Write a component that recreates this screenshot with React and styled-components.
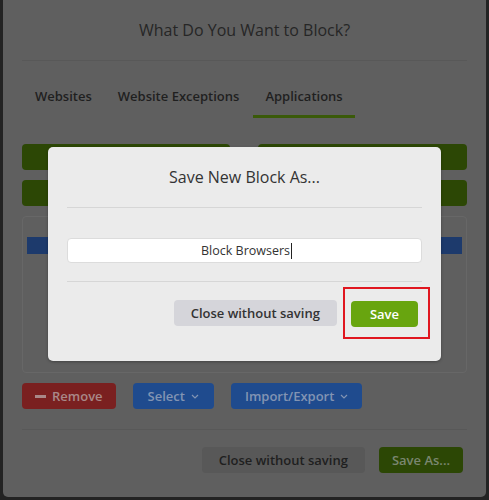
import React from "react";
import styled, { createGlobalStyle } from "styled-components";

const Global = createGlobalStyle`
  html, body {
    margin: 0;
    padding: 0;
    background: #232323;
  }
  body {
    font-family: "Open Sans", "Liberation Sans", sans-serif;
  }
`;

const Page = styled.div`
  position: relative;
  width: 489px;
  height: 500px;
  padding: 0 3px 3px 3px;
  box-sizing: border-box;
`;

const Dialog = styled.div`
  background: #5f5f5f;
  height: 497px;
  box-sizing: border-box;
  border-radius: 0 0 5px 5px;
  padding: 19px 19px 24px 19px;
  display: flex;
  flex-direction: column;
`;

const Title = styled.h2`
  margin: 0;
  font-size: 16px;
  font-weight: 400;
  line-height: 22px;
  text-align: center;
  color: ${(p) => (p.$dim ? "#262626" : "#333")};
`;

const Rule = styled.hr`
  border: 0;
  border-top: 1px solid ${(p) => (p.$dim ? "#585858" : "#d6d6d6")};
  margin: ${(p) => p.$m || "19px 0 0 0"};
`;

const Tabs = styled.div`
  display: flex;
  gap: 2px;
  margin-top: 26px;
  padding-left: 1px;
`;

const Tab = styled.div`
  padding: 0 12px 10px;
  font-size: 13px;
  font-weight: 600;
  line-height: 18px;
  color: #1f1f1f;
  border-bottom: 3px solid ${(p) => (p.$active ? "#3a5a09" : "transparent")};
`;

const Grid = styled.div`
  display: grid;
  grid-template-columns: 208px 209px;
  column-gap: 28px;
  row-gap: 10px;
  margin-top: 26px;
`;

const GreenBar = styled.div`
  height: 26px;
  background: #2c4705;
  border-radius: 4px;
`;

const Panel = styled.div`
  margin-top: 10px;
  height: 158px;
  box-sizing: border-box;
  border: 1px solid #676767;
  border-radius: 4px;
  padding: 20px 4px 0 4px;
`;

const BlueRow = styled.div`
  height: 17px;
  background: #1d3a6c;
`;

const Actions = styled.div`
  display: flex;
  gap: 17px;
  margin-top: 10px;
`;

const Btn = styled.div`
  height: 26px;
  box-sizing: border-box;
  display: inline-flex;
  align-items: center;
  justify-content: center;
  gap: 6px;
  padding: 0 ${(p) => p.$px || 14}px;
  border-radius: 4px;
  font-size: 13px;
  font-weight: 600;
  background: ${(p) => p.$bg};
  color: ${(p) => p.$fg};
  white-space: nowrap;
`;

const Footer = styled.div`
  display: flex;
  justify-content: flex-end;
  gap: 14px;
  margin-top: 17px;
  padding-right: 4px;
`;

const Overlay = styled.div`
  position: absolute;
  inset: 0;
  display: flex;
  align-items: flex-start;
  justify-content: center;
  padding-top: 147px;
  box-sizing: border-box;
`;

const Modal = styled.div`
  width: 393px;
  box-sizing: border-box;
  background: #ebebeb;
  border-radius: 5px;
  padding: 19px 19px 22px;
  display: flex;
  flex-direction: column;
  box-shadow: 0 1px 3px rgba(0, 0, 0, 0.3);
`;

const Field = styled.div`
  margin-top: 30px;
  height: 25px;
  box-sizing: border-box;
  background: #fff;
  border: 1px solid #dcdcdc;
  border-radius: 4px;
  display: flex;
  align-items: center;
  justify-content: center;
  padding-left: 4px;
  font-size: 12.5px;
  color: #333;
`;

const Caret = styled.span`
  display: inline-block;
  width: 1px;
  height: 16px;
  background: #222;
  margin-left: 1px;
`;

const ModalFooter = styled.div`
  display: flex;
  justify-content: flex-end;
  align-items: center;
  gap: 6px;
  margin-top: 5px;
  margin-right: -8px;
`;

const Highlight = styled.div`
  border: 2px solid #e0161f;
  padding: 12px 10px 10px 6px;
  display: flex;
`;

const Chevron = ({ color }) => (
  <svg width="8" height="5" viewBox="0 0 8 5" fill="none">
    <path d="M1 1l3 3 3-3" stroke={color} strokeWidth="1.2" />
  </svg>
);

export default function App() {
  return (
    <Page>
      <Global />
      <Dialog>
        <Title $dim>What Do You Want to Block?</Title>
        <Rule $dim />
        <Tabs>
          <Tab>Websites</Tab>
          <Tab>Website Exceptions</Tab>
          <Tab $active>Applications</Tab>
        </Tabs>
        <Grid>
          <GreenBar />
          <GreenBar />
          <GreenBar />
          <GreenBar />
        </Grid>
        <Panel>
          <BlueRow />
        </Panel>
        <Actions>
          <Btn $bg="#7a2020" $fg="#a98888" $px={13}>
            <svg width="11" height="3" viewBox="0 0 11 3">
              <rect width="11" height="3" fill="#a98888" />
            </svg>
            Remove
          </Btn>
          <Btn $bg="#1f4b8e" $fg="#8294b3" $px={15}>
            Select <Chevron color="#8294b3" />
          </Btn>
          <Btn $bg="#1f4b8e" $fg="#8294b3">
            Import/Export <Chevron color="#8294b3" />
          </Btn>
        </Actions>
        <Rule $dim $m="20px 0 0 0" />
        <Footer>
          <Btn $bg="#585858" $fg="#1f1f1f" $px={17}>
            Close without saving
          </Btn>
          <Btn $bg="#2c4705" $fg="#7a8670" $px={13}>
            Save As...
          </Btn>
        </Footer>
      </Dialog>

      <Overlay>
        <Modal>
          <Title>Save New Block As...</Title>
          <Rule />
          <Field>
            Block Browsers
            <Caret />
          </Field>
          <Rule $m="18px 0 0 0" />
          <ModalFooter>
            <Btn $bg="#d5d5da" $fg="#333" $px={17}>
              Close without saving
            </Btn>
            <Highlight>
              <Btn $bg="#68a50f" $fg="#fff" $px={19}>
                Save
              </Btn>
            </Highlight>
          </ModalFooter>
        </Modal>
      </Overlay>
    </Page>
  );
}
